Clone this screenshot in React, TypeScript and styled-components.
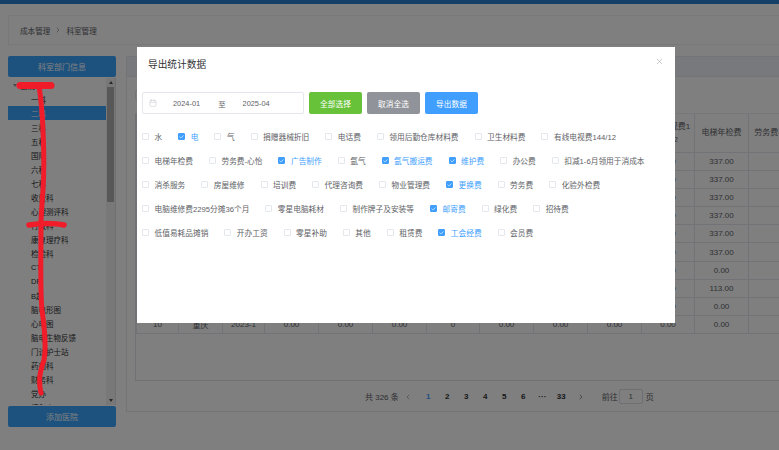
import React from 'react';
import styled, { createGlobalStyle } from 'styled-components';
import { Calendar, Check, ChevronLeft, ChevronRight, X } from 'lucide-react';

const GlobalStyle = createGlobalStyle`
    html, body {
        margin: 0;
        padding: 0;
        background: #fff;
        font-family: "Liberation Sans", "Noto Sans CJK SC", sans-serif;
    }
    * {
        box-sizing: border-box;
    }
`;

const Page = styled.div`
    position: relative;
    width: 779px;
    height: 450px;
    overflow: hidden;
    background: #fefefe;
`;

const TopBar = styled.div`
    height: 4px;
    background: #287ecc;
`;

const Breadcrumb = styled.div`
    display: flex;
    align-items: center;
    gap: 4px;
    height: 30px;
    margin: 11px 0 0 8px;
    padding-left: 11px;
    border: 1px solid #eef0f3;
    border-right: none;
    font-size: 7.6px;
    color: #606266;
`;

const Content = styled.div`
    display: flex;
    gap: 10px;
    margin: 11px 0 0 8px;
`;

const Sidebar = styled.div`
    display: flex;
    flex-direction: column;
    gap: 1px;
    width: 108px;
    flex: none;
`;

const BlueBar = styled.div`
    display: flex;
    align-items: center;
    justify-content: center;
    height: 21px;
    border-radius: 2px;
    background: #3aa4ff;
    color: #fff;
    font-size: 8px;
`;

const Tree = styled.div`
    display: flex;
    height: 327px;
    border-right: 1px solid #dcdfe6;
`;

const TreeList = styled.div`
    flex: 1;
    overflow: hidden;
`;

const TreeRow = styled.div<{ $active?: boolean; $root?: boolean }>`
    display: flex;
    align-items: center;
    gap: 3px;
    height: 14px;
    padding: 1px 0 0 ${(props) => (props.$root ? '5px' : '23px')};
    font-size: 7.5px;
    white-space: nowrap;
    color: ${(props) => (props.$active ? '#fff' : '#303133')};
    background: ${(props) => (props.$active ? '#3aa4ff' : 'transparent')};
`;

const Caret = styled.span`
    width: 0;
    height: 0;
    border-left: 2.5px solid transparent;
    border-right: 2.5px solid transparent;
    border-top: 3px solid #909399;
`;

const Scrollbar = styled.div`
    display: flex;
    flex-direction: column;
    align-items: center;
    justify-content: space-between;
    width: 9px;
    flex: none;
    background: #f1f1f1;
`;

const ThumbGroup = styled.div`
    display: flex;
    flex-direction: column;
    align-items: center;
    width: 100%;
`;

const Arrow = styled.div<{ $down?: boolean }>`
    width: 0;
    height: 0;
    margin: 3px 0;
    border-left: 2.5px solid transparent;
    border-right: 2.5px solid transparent;
    border-bottom: ${(props) => (props.$down ? 'none' : '3px solid #505050')};
    border-top: ${(props) => (props.$down ? '3px solid #505050' : 'none')};
`;

const Thumb = styled.div`
    width: 7px;
    height: 115px;
    background: #b0b0b0;
`;

const Main = styled.div`
    flex: 1;
    min-width: 0;
    height: 356px;
    border: 1px solid #e6e8ec;
    border-right: none;
`;

const MainHead = styled.div`
    height: 20px;
    background: #f0f3f8;
    border-bottom: 1px solid #e6e8ec;
`;

const Toolbar = styled.div`
    display: flex;
    align-items: center;
    height: 36px;
    padding-left: 8px;
`;

const ToolChip = styled.div`
    width: 40px;
    height: 10px;
    border: 1px solid #e6e8ec;
    border-radius: 2px;
`;

const TableBox = styled.div`
    height: 268px;
    margin-left: 8px;
    overflow: hidden;
    border: 1px solid #dfe2e8;
    border-right: none;
    border-top: 1px solid #ebeef5;
`;

const Table = styled.table`
    width: 666px;
    table-layout: fixed;
    border-collapse: collapse;
    font-size: 8px;
    color: #606266;
    text-align: center;
`;

const Th = styled.th<{ $w: number }>`
    width: ${(props) => props.$w}px;
    height: 38px;
    padding: 0 3px;
    font-weight: 400;
    line-height: 13px;
    word-break: break-all;
    color: #606266;
    border: 1px solid #e4e7ed;
    border-top: none;
`;

const Td = styled.td`
    height: 18.2px;
    padding: 0;
    border: 1px solid #e4e7ed;
`;

const Pager = styled.div`
    display: flex;
    align-items: center;
    height: 31px;
    padding-left: 238px;
    font-size: 8px;
    color: #606266;
`;

const PageNum = styled.span<{ $on?: boolean }>`
    width: 19px;
    text-align: center;
    font-weight: 700;
    color: ${(props) => (props.$on ? '#3fa0ff' : '#303133')};
`;

const PagerLabel = styled.span<{ $gap?: number }>`
    display: flex;
    margin-left: ${(props) => props.$gap || 0}px;
    white-space: nowrap;
`;

const PagerInput = styled.span`
    display: flex;
    align-items: center;
    justify-content: center;
    width: 24px;
    height: 15px;
    margin: 0 3px 0 1px;
    border: 1px solid #dcdfe6;
    border-radius: 2px;
`;

const Footer = styled.div`
    height: 20px;
    margin: 27px 0 0 8px;
    border-top: 1px solid #e6e8ec;
`;

const Overlay = styled.div`
    position: absolute;
    inset: 0;
    background: rgba(0, 0, 0, 0.5);
`;

const Modal = styled.div`
    position: relative;
    width: 538px;
    height: 276px;
    margin: 47px 0 0 137px;
    padding: 0 28px 0 5px;
    background: #fff;
`;

const Title = styled.div`
    height: 45px;
    padding: 12px 0 0 6px;
    font-size: 9.7px;
    line-height: 12px;
    color: #303133;
`;

const CloseButton = styled.div`
    position: absolute;
    top: 10px;
    right: 11px;
    display: flex;
    color: #909399;
`;

const Controls = styled.div`
    display: flex;
    gap: 5px;
`;

const DateRange = styled.div`
    display: flex;
    align-items: center;
    width: 162px;
    height: 22px;
    padding-left: 6px;
    border: 1px solid #e4e7ed;
    border-radius: 2px;
    font-size: 7.4px;
    color: #606266;
`;

const DateValue = styled.span<{ $left: number }>`
    margin-left: ${(props) => props.$left}px;
`;

const ActionButton = styled.div<{ $bg: string }>`
    display: flex;
    align-items: center;
    justify-content: center;
    width: 53px;
    height: 22px;
    border-radius: 2px;
    background: ${(props) => props.$bg};
    color: #fff;
    font-size: 7.7px;
`;

const CheckGroup = styled.div`
    display: flex;
    flex-wrap: wrap;
    column-gap: 16px;
    row-gap: 14px;
    margin-top: 17.5px;
`;

const CheckItem = styled.label<{ $on?: boolean }>`
    display: flex;
    align-items: center;
    gap: 5.5px;
    height: 10px;
    font-size: 7.7px;
    white-space: nowrap;
    color: ${(props) => (props.$on ? '#409eff' : '#606266')};
`;

const CheckBox = styled.span<{ $on?: boolean }>`
    display: flex;
    align-items: center;
    justify-content: center;
    width: 7px;
    height: 7px;
    flex: none;
    border: 1px solid ${(props) => (props.$on ? '#409eff' : '#e4e7ed')};
    border-radius: 1px;
    background: ${(props) => (props.$on ? '#409eff' : '#fff')};
    color: #fff;
`;

const Scribble = styled.svg`
    position: absolute;
    left: 0;
    top: 0;
    pointer-events: none;
`;

const departments = [
    '一科', '二科', '三科', '五科', '国际', '六科', '七科', '收费科', '心理测评科', '行政科',
    '康复理疗科', '检验科', 'CT', 'DR', 'B超', '脑电形图', '心电图', '脑电生物反馈', '门诊护士站',
    '药剂科', '财务科', '党办', '缓和人',
];

const feeItems = [
    { name: '水' }, { name: '电', on: true }, { name: '气' }, { name: '捐赠器械折旧' }, { name: '电话费' },
    { name: '领用后勤仓库材料费' }, { name: '卫生材料费' }, { name: '有线电视费144/12' },
    { name: '电梯年检费' }, { name: '劳务费-心怡' }, { name: '广告制作', on: true }, { name: '氩气' },
    { name: '氩气搬运费', on: true }, { name: '维护费', on: true }, { name: '办公费' }, { name: '扣减1-6月领用于消成本' },
    { name: '消杀服务' }, { name: '房屋维修' }, { name: '培训费' }, { name: '代理咨询费' }, { name: '物业管理费' },
    { name: '更换费', on: true }, { name: '劳务费' }, { name: '化验外检费' },
    { name: '电脑维修费2295分摊36个月' }, { name: '零星电脑耗材' }, { name: '制作牌子及安装等' },
    { name: '邮寄费', on: true }, { name: '绿化费' }, { name: '招待费' },
    { name: '低值易耗品摊销' }, { name: '开办工资' }, { name: '零星补助' }, { name: '其他' }, { name: '租赁费' },
    { name: '工会经费', on: true }, { name: '会员费' },
];

const columns = [
    { label: '序号', w: 42 }, { label: '科室', w: 44 }, { label: '月份', w: 42 }, { label: '水', w: 54 },
    { label: '电', w: 54 }, { label: '气', w: 54 }, { label: '捐赠器械折旧', w: 53 }, { label: '电话费', w: 54 },
    { label: '领用后勤仓库材料费', w: 54 }, { label: '卫生材料费', w: 54 }, { label: '有线电视费144/12', w: 53 },
    { label: '电梯年检费', w: 54 }, { label: '劳务费-心怡', w: 54 },
];

const elevator = ['337.00', '337.00', '337.00', '337.00', '337.00', '337.00', '0.00', '113.00', '0.00', '0.00'];

export default function App() {
    return (
        <Page>
            <GlobalStyle />
            <TopBar />
            <Breadcrumb>
                <span>成本管理</span>
                <ChevronRight size={8} strokeWidth={1.5} />
                <span>科室管理</span>
            </Breadcrumb>
            <Content>
                <Sidebar>
                    <BlueBar>科室部门信息</BlueBar>
                    <Tree>
                        <TreeList>
                            <TreeRow $root><Caret />医院</TreeRow>
                            {departments.map((name, i) => (
                                <TreeRow key={name} $active={i === 1}>{name}</TreeRow>
                            ))}
                        </TreeList>
                        <Scrollbar>
                            <ThumbGroup>
                                <Arrow />
                                <Thumb />
                            </ThumbGroup>
                            <Arrow $down />
                        </Scrollbar>
                    </Tree>
                    <BlueBar>添加医院</BlueBar>
                </Sidebar>
                <Main>
                    <MainHead />
                    <Toolbar>
                        <ToolChip />
                    </Toolbar>
                    <TableBox>
                        <Table>
                            <thead>
                                <tr>
                                    {columns.map((col) => (
                                        <Th key={col.label} $w={col.w}>{col.label}</Th>
                                    ))}
                                </tr>
                            </thead>
                            <tbody>
                                {elevator.map((value, i) => (
                                    <tr key={i}>
                                        <Td>{i + 1}</Td>
                                        <Td>重庆</Td>
                                        <Td>2023-1</Td>
                                        <Td>0.00</Td>
                                        <Td>0.00</Td>
                                        <Td>0.00</Td>
                                        <Td>0</Td>
                                        <Td>0.00</Td>
                                        <Td>0.00</Td>
                                        <Td>0.00</Td>
                                        <Td>0.00</Td>
                                        <Td>{value}</Td>
                                        <Td />
                                    </tr>
                                ))}
                            </tbody>
                        </Table>
                    </TableBox>
                    <Pager>
                        <PagerLabel>共 326 条</PagerLabel>
                        <PagerLabel $gap={5}><ChevronLeft size={8} color="#909399" /></PagerLabel>
                        <PagerLabel $gap={7} />
                        {['1', '2', '3', '4', '5', '6', '···', '33'].map((n, i) => (
                            <PageNum key={n} $on={i === 0}>{n}</PageNum>
                        ))}
                        <PagerLabel $gap={6}><ChevronRight size={8} /></PagerLabel>
                        <PagerLabel $gap={17}>前往</PagerLabel>
                        <PagerInput>1</PagerInput>
                        <PagerLabel>页</PagerLabel>
                    </Pager>
                </Main>
            </Content>
            <Footer />
            <Overlay>
                <Modal>
                    <Title>导出统计数据</Title>
                    <CloseButton><X size={9} strokeWidth={1.3} /></CloseButton>
                    <Controls>
                        <DateRange>
                            <Calendar size={8} color="#c0c4cc" strokeWidth={1.5} />
                            <DateValue $left={16}>2024-01</DateValue>
                            <DateValue $left={18}>至</DateValue>
                            <DateValue $left={17}>2025-04</DateValue>
                        </DateRange>
                        <ActionButton $bg="#67c23a">全部选择</ActionButton>
                        <ActionButton $bg="#909399">取消全选</ActionButton>
                        <ActionButton $bg="#409eff">导出数据</ActionButton>
                    </Controls>
                    <CheckGroup>
                        {feeItems.map((item) => (
                            <CheckItem key={item.name} $on={item.on}>
                                <CheckBox $on={item.on}>
                                    {item.on && <Check size={6} strokeWidth={3} />}
                                </CheckBox>
                                {item.name}
                            </CheckItem>
                        ))}
                    </CheckGroup>
                </Modal>
            </Overlay>
            <Scribble width="140" height="450" viewBox="0 0 140 450" fill="none" stroke="#f01c2a" strokeLinecap="round">
                <path d="M20 85.5 L51 85.5" strokeWidth="7" />
                <path d="M39 86 C43 110 45 160 43 190 C42 205 41 215 41 226 C41 260 40 290 42 310 C44 325 47 345 44 360 C40 372 38 380 41 393" strokeWidth="5" />
                <path d="M29 225 C40 223 55 223 64 225" strokeWidth="5.5" />
            </Scribble>
        </Page>
    );
}
